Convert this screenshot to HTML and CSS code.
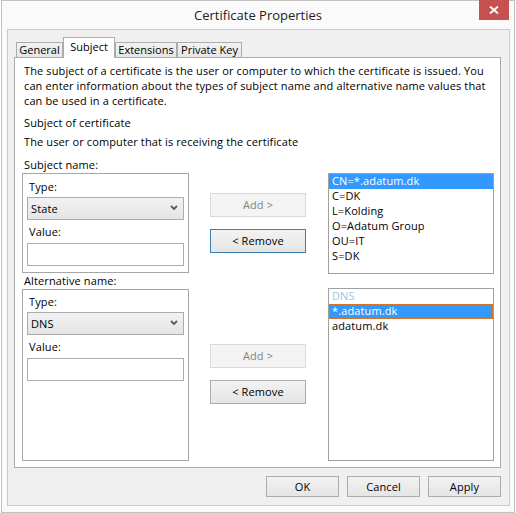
FILE: index.html
```html
<!DOCTYPE html>
<html>
<head>
<meta charset="utf-8">
<title>Certificate Properties</title>
<link rel="stylesheet" href="styles.css">
</head>
<body>
<div class="window">
  <div class="titlebar">
    <span class="title">Certificate Properties</span>
    <div class="close">
      <svg width="10" height="8" viewBox="0 0 10 8"><path d="M1 0.5 L9 7.5 M9 0.5 L1 7.5" stroke="#fff" stroke-width="1.8" fill="none"/></svg>
    </div>
  </div>
  <div class="client">
    <div class="tabs">
      <div class="tab t-general">General</div>
      <div class="tab t-subject active">Subject</div>
      <div class="tab t-ext">Extensions</div>
      <div class="tab t-key">Private Key</div>
    </div>
    <div class="page">
      <p class="intro">The subject of a certificate is the user or computer to which the certificate is issued. You<br>can enter information about the types of subject name and alternative name values that<br>can be used in a certificate.</p>
      <p class="heading">Subject of certificate</p>
      <p class="sub">The user or computer that is receiving the certificate</p>

      <div class="section">
        <div class="glabel">Subject name:</div>
        <div class="gbox">
          <div class="flabel">Type:</div>
          <div class="select"><span>State</span><svg width="8" height="6" viewBox="0 0 8 6"><path d="M1 1 L4 4 L7 1" stroke="#5a5a5a" stroke-width="1.8" fill="none"/></svg></div>
          <div class="flabel val">Value:</div>
          <div class="input"></div>
        </div>
        <div class="btns">
          <div class="btn disabled">Add &gt;</div>
          <div class="btn focused">&lt; Remove</div>
        </div>
        <div class="list list-subject">
          <div class="item selected">CN=*.adatum.dk</div>
          <div class="item">C=DK</div>
          <div class="item">L=Kolding</div>
          <div class="item">O=Adatum Group</div>
          <div class="item">OU=IT</div>
          <div class="item">S=DK</div>
        </div>
      </div>

      <div class="section section-alt">
        <div class="glabel">Alternative name:</div>
        <div class="gbox gbox-tall">
          <div class="flabel">Type:</div>
          <div class="select"><span>DNS</span><svg width="8" height="6" viewBox="0 0 8 6"><path d="M1 1 L4 4 L7 1" stroke="#5a5a5a" stroke-width="1.8" fill="none"/></svg></div>
          <div class="flabel val">Value:</div>
          <div class="input"></div>
        </div>
        <div class="btns">
          <div class="btn disabled">Add &gt;</div>
          <div class="btn">&lt; Remove</div>
        </div>
        <div class="list list-alt">
          <div class="item header">DNS</div>
          <div class="item selected focus">*.adatum.dk</div>
          <div class="item">adatum.dk</div>
        </div>
      </div>
    </div>
    <div class="footer">
      <div class="btn fbtn">OK</div>
      <div class="btn fbtn">Cancel</div>
      <div class="btn fbtn">Apply</div>
    </div>
  </div>
</div>
</body>
</html>
```
FILE: styles.css
```css
* { box-sizing: border-box; }

body {
  margin: 0;
  background: #ffffff;
  font-family: "Open Sans", "Noto Sans", sans-serif;
  font-size: 11px;
  line-height: 15px;
  letter-spacing: 0.12px;
  color: #000;
}

.window {
  margin-left: 1px;
  width: 514px;
  height: 513px;
  border: 1px solid #c2c2c2;
  background: #fafafa;
  display: flex;
  flex-direction: column;
  padding: 0 4px 6px 5px;
}

.titlebar {
  height: 28px;
  margin: 0 -4px 0 -5px;
  display: grid;
  grid-template-columns: 1fr auto 1fr;
  align-items: start;
}

.title {
  grid-column: 2;
  font-size: 13px;
  line-height: 28px;
  letter-spacing: 0;
  color: #222;
}

.close {
  grid-column: 3;
  justify-self: end;
  margin-top: -1px;
  margin-right: 5px;
  width: 30px;
  height: 20px;
  background: #c75050;
  display: flex;
  align-items: center;
  justify-content: center;
}

.client {
  flex: 1;
  border: 1px solid #cacaca;
  background: #f0f0f0;
  display: flex;
  flex-direction: column;
  padding: 7px 8px 8px 6px;
}

.tabs {
  height: 21px;
  margin-bottom: -1px;
  padding-left: 2px;
  display: flex;
  align-items: flex-end;
  position: relative;
  z-index: 1;
}

.tab {
  height: 15px;
  margin-bottom: 1px;
  border: 1px solid #acacac;
  border-bottom: none;
  background: linear-gradient(#f2f2f2, #e6e6e6);
  text-align: center;
  line-height: 13px;
  letter-spacing: 0;
}

.tab.active {
  height: 21px;
  margin-bottom: 0;
  background: #ffffff;
  line-height: 17px;
}

.t-general { width: 47px; }
.t-subject { width: 52px; }
.t-ext { width: 62px; }
.t-key { width: 65px; }

.page {
  flex: 1;
  background: #ffffff;
  border: 1px solid #acacac;
  padding: 5px 5px 6px 7px;
  display: flex;
  flex-direction: column;
}

.page p { margin: 0; padding-left: 2px; }
.heading { margin-top: 7px !important; }
.sub { margin-top: 4px !important; }

.section {
  margin-top: 9px;
  display: grid;
  grid-template-columns: 167px 96px 167px;
  grid-template-rows: 15px auto;
  column-gap: 21px;
  align-items: start;
}
.section-alt { margin-top: 0; }

.glabel {
  grid-column: 1;
  grid-row: 1;
  padding-left: 2px;
  margin-top: -1px;
}

.gbox {
  grid-column: 1;
  grid-row: 2;
  border: 1px solid #a6a6a6;
  padding: 5px 4px 6px;
  display: flex;
  flex-direction: column;
}
.gbox-tall { height: 172px; padding-top: 4px; }

.flabel { padding-left: 2px; height: 15px; }
.flabel.val { margin-top: 4px; }

.select {
  margin-top: 3px;
  height: 23px;
  border: 1px solid #acacac;
  background: linear-gradient(#f2f2f2, #e5e5e5);
  display: flex;
  align-items: center;
  justify-content: space-between;
  padding: 0 5px 1px 3px;
}

.input {
  margin-top: 4px;
  height: 23px;
  border: 1px solid #acacac;
  background: #ffffff;
}

.btns {
  grid-column: 2;
  grid-row: 2;
  margin-top: 20px;
  display: flex;
  flex-direction: column;
  gap: 12px;
}
.section-alt .btns { margin-top: 55px; }

.btn {
  height: 24px;
  padding-bottom: 1px;
  border: 1px solid #acacac;
  background: linear-gradient(#f2f2f2, #e5e5e5);
  display: flex;
  align-items: center;
  justify-content: center;
  color: #000;
}
.btn.disabled {
  border-color: #d9d9d9;
  background: #f4f4f4;
  color: #838383;
}
.btn.focused { border-color: #3c7fb1; }

.list {
  grid-column: 3;
  grid-row: 2;
  margin-left: 1px;
  border: 1px solid #a0a0a0;
  background: #ffffff;
}
.list-subject { height: 101px; }
.list-alt { margin-top: -1px; height: 173px; }

.item {
  height: 15px;
  line-height: 14px;
  padding-left: 3px;
  white-space: nowrap;
}
.item.selected { background: #3399ff; color: #ffffff; }
.item.header { color: #8fc8f2; }
.item.focus { outline: 1px dotted #d8772a; outline-offset: -1px; }

.footer {
  margin-top: 8px;
  display: flex;
  justify-content: flex-end;
  gap: 8px;
}
.fbtn { width: 73px; height: 21px; }
```
